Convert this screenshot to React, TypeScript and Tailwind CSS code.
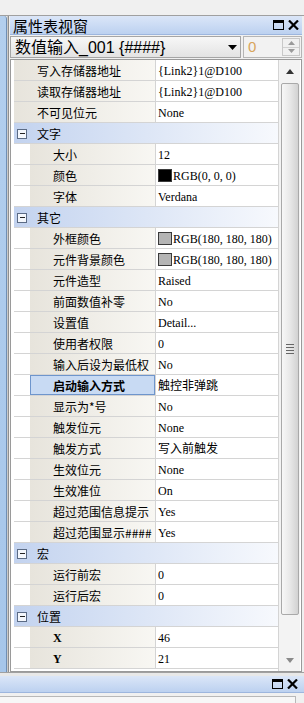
import React from 'react';

type Row =
  | { kind: 'cat'; label: string }
  | { kind: 'item'; name: string; value: string; root?: boolean; swatch?: string; selected?: boolean; latin?: boolean };

const rows: Row[] = [
  { kind: 'item', name: '写入存储器地址', value: '{Link2}1@D100', root: true },
  { kind: 'item', name: '读取存储器地址', value: '{Link2}1@D100', root: true },
  { kind: 'item', name: '不可见位元', value: 'None', root: true },
  { kind: 'cat', label: '文字' },
  { kind: 'item', name: '大小', value: '12' },
  { kind: 'item', name: '颜色', value: 'RGB(0, 0, 0)', swatch: '#000000' },
  { kind: 'item', name: '字体', value: 'Verdana' },
  { kind: 'cat', label: '其它' },
  { kind: 'item', name: '外框颜色', value: 'RGB(180, 180, 180)', swatch: '#b4b4b4' },
  { kind: 'item', name: '元件背景颜色', value: 'RGB(180, 180, 180)', swatch: '#b4b4b4' },
  { kind: 'item', name: '元件造型', value: 'Raised' },
  { kind: 'item', name: '前面数值补零', value: 'No' },
  { kind: 'item', name: '设置值', value: 'Detail...' },
  { kind: 'item', name: '使用者权限', value: '0' },
  { kind: 'item', name: '输入后设为最低权', value: 'No' },
  { kind: 'item', name: '启动输入方式', value: '触控非弹跳', selected: true },
  { kind: 'item', name: '显示为*号', value: 'No' },
  { kind: 'item', name: '触发位元', value: 'None' },
  { kind: 'item', name: '触发方式', value: '写入前触发' },
  { kind: 'item', name: '生效位元', value: 'None' },
  { kind: 'item', name: '生效准位', value: 'On' },
  { kind: 'item', name: '超过范围信息提示', value: 'Yes' },
  { kind: 'item', name: '超过范围显示####', value: 'Yes' },
  { kind: 'cat', label: '宏' },
  { kind: 'item', name: '运行前宏', value: '0' },
  { kind: 'item', name: '运行后宏', value: '0' },
  { kind: 'cat', label: '位置' },
  { kind: 'item', name: 'X', value: '46', latin: true },
  { kind: 'item', name: 'Y', value: '21', latin: true },
];

const cjk = "font-['Noto_Sans_CJK_SC',sans-serif]";
const serif = "font-['Liberation_Serif','Noto_Sans_CJK_SC',serif]";

const WinButtons: React.FC = () => (
  <div className="flex items-center gap-[4px] pr-[3px]">
    <svg width="11" height="10" viewBox="0 0 11 10">
      <rect x="0.5" y="0.5" width="10" height="9" fill="none" stroke="#000" />
      <rect x="0" y="0" width="11" height="3" fill="#000" />
    </svg>
    <svg width="11" height="10" viewBox="0 0 11 10">
      <path d="M1 0.5 L10 9.5 M10 0.5 L1 9.5" stroke="#000" strokeWidth="2.2" />
    </svg>
  </div>
);

const Minus: React.FC = () => (
  <div className="w-[10px] h-[10px] border border-[#5b6b85] bg-[#f4f7fc] flex items-center justify-center">
    <div className="w-[5px] h-[1px] bg-[#222]" />
  </div>
);

const GridRow: React.FC<{ row: Row }> = ({ row }) => {
  if (row.kind === 'cat') {
    return (
      <div className="h-[21px] shrink-0 flex items-center border-b border-[#d4d4d4] bg-gradient-to-r from-[#c3d3ef] via-[#dde6f6] to-[#f7f9fd] pl-[3px] pt-[1px]">
        <Minus />
        <span className={`${cjk} text-[12px] text-black ml-[10px]`}>{row.label}</span>
      </div>
    );
  }
  return (
    <div className="h-[21px] shrink-0 flex border-b border-[#d4d4d4]">
      {!row.root && <div className="w-[16px] bg-white shrink-0" />}
      <div
        className={`${row.root ? 'w-[141px]' : 'w-[125px]'} shrink-0 flex items-center pt-[1px] ${
          row.selected
            ? 'bg-[#c8daf3] border border-[#6e95cc] pl-[22px]'
            : 'bg-gradient-to-r from-[#e7e4dc] to-[#f8f7f3] pl-[23px]'
        }`}
      >
        <span
          className={`${row.latin ? `${serif} font-bold` : cjk} ${
            row.selected ? 'font-bold' : ''
          } text-[12px] text-black whitespace-nowrap`}
        >
          {row.name}
        </span>
      </div>
      <div className="w-[1px] bg-[#d4d4d4] shrink-0" />
      <div className={`flex-1 flex items-center pl-[2px] pt-[1px] bg-white ${serif} text-[12px] text-black whitespace-nowrap`}>
        {row.swatch && (
          <div className="w-[14px] h-[13px] border border-[#3a3a3a] mr-[1px]" style={{ backgroundColor: row.swatch }} />
        )}
        <span>{row.value}</span>
      </div>
    </div>
  );
};

const Scrollbar: React.FC = () => (
  <div className="w-[21px] shrink-0 bg-[#f3f3f3] flex flex-col items-center">
    <div className="h-[22px] shrink-0 flex items-center justify-center">
      <svg width="8" height="5" viewBox="0 0 8 5">
        <path d="M4 0 L8 5 L0 5 Z" fill="#333" />
      </svg>
    </div>
    <div className="w-[18px] h-[532px] shrink-0 mt-[1px] rounded-[2px] border border-[#a9a9a9] bg-gradient-to-r from-[#f7f7f7] via-[#e8e8e8] to-[#d2d2d2] flex items-center justify-center">
      <div className="flex flex-col gap-[2px]">
        <div className="w-[8px] h-[1px] bg-[#666]" />
        <div className="w-[8px] h-[1px] bg-[#666]" />
        <div className="w-[8px] h-[1px] bg-[#666]" />
        <div className="w-[8px] h-[1px] bg-[#666]" />
      </div>
    </div>
    <div className="flex-1 flex items-end justify-center pb-[8px]">
      <svg width="8" height="5" viewBox="0 0 8 5">
        <path d="M0 0 L8 0 L4 5 Z" fill="#8a8a8a" />
      </svg>
    </div>
  </div>
);

export default function App() {
  return (
    <div className="w-[304px] h-[703px] bg-[#f0f0f0] overflow-hidden flex flex-col">
      <div className="h-[16px] shrink-0 border-b border-[#a0a0a0]" />
      <div className="h-[656px] shrink-0 flex">
        <div className="w-[7px] shrink-0 bg-gradient-to-b from-[#b3cfee] to-[#a6c6ea] border-r border-[#6f8fb5] rounded-tr-[3px]" />
        <div className="w-[1px] shrink-0 bg-[#c9c9c9]" />
        <div className="flex-1 flex flex-col border-l border-[#8f8f8f] pl-[1px] pr-[2px] bg-[#f0f0f0]">
          <div className="h-[19px] shrink-0 flex items-center justify-between bg-gradient-to-b from-[#dbe6f8] to-[#bcd1f0] border-b border-[#9db6de]">
            <span className={`${cjk} text-[15px] leading-none text-black pl-[3px] pt-[1px]`}>属性表视窗</span>
            <WinButtons />
          </div>
          <div className="h-[24px] shrink-0 flex items-stretch py-[1px] gap-[2px]">
            <div className="w-[231px] flex items-center justify-between border border-[#a5a5a5] bg-gradient-to-b from-[#f7f7f7] to-[#e3e3e3] pl-[4px] pr-[3px]">
              <span className="font-['Liberation_Sans','Noto_Sans_CJK_SC',sans-serif] text-[16px] leading-none text-black whitespace-nowrap pt-[1px]">
                数值输入_001 {'{####}'}
              </span>
              <svg width="9" height="5" viewBox="0 0 9 5">
                <path d="M0 0 L9 0 L4.5 5 Z" fill="#000" />
              </svg>
            </div>
            <div className="flex-1 flex items-stretch border border-[#b5b5b5] bg-[#f2f2f2]">
              <span className="flex-1 flex items-center pl-[4px] font-['Liberation_Sans',sans-serif] text-[15px] text-[#d8a55c]">0</span>
              <div className="w-[18px] flex flex-col border border-[#c8c8c8] m-[1px] bg-[#f0f0f0]">
                <div className="flex-1 flex items-center justify-center border-b border-[#d0d0d0]">
                  <svg width="7" height="4" viewBox="0 0 7 4"><path d="M3.5 0 L7 4 L0 4 Z" fill="#9a9a9a" /></svg>
                </div>
                <div className="flex-1 flex items-center justify-center">
                  <svg width="7" height="4" viewBox="0 0 7 4"><path d="M0 0 L7 0 L3.5 4 Z" fill="#9a9a9a" /></svg>
                </div>
              </div>
            </div>
          </div>
          <div className="flex-1 min-h-0 overflow-hidden flex border border-[#9a9a9a] bg-white">
            <div className="w-[3px] shrink-0 bg-white" />
            <div className="w-[264px] shrink-0 flex flex-col">
              {rows.map((r, i) => (
                <GridRow key={i} row={r} />
              ))}
            </div>
            <div className="w-[1px] shrink-0 bg-[#d4d4d4]" />
            <Scrollbar />
          </div>
        </div>
      </div>
      <div className="h-[4px] shrink-0 border-t border-[#a0a0a0] bg-[#e8e8e8]" />
      <div className="h-[17px] shrink-0 flex items-center justify-end bg-gradient-to-b from-[#dbe6f8] to-[#bcd1f0] border-b border-[#9db6de] pr-[3px]">
        <WinButtons />
      </div>
      <div className="flex-1 pt-[3px] pr-[8px]">
        <div className="h-full border-t border-r border-[#b8b8b8] bg-[#f7f7f7]" />
      </div>
    </div>
  );
}
